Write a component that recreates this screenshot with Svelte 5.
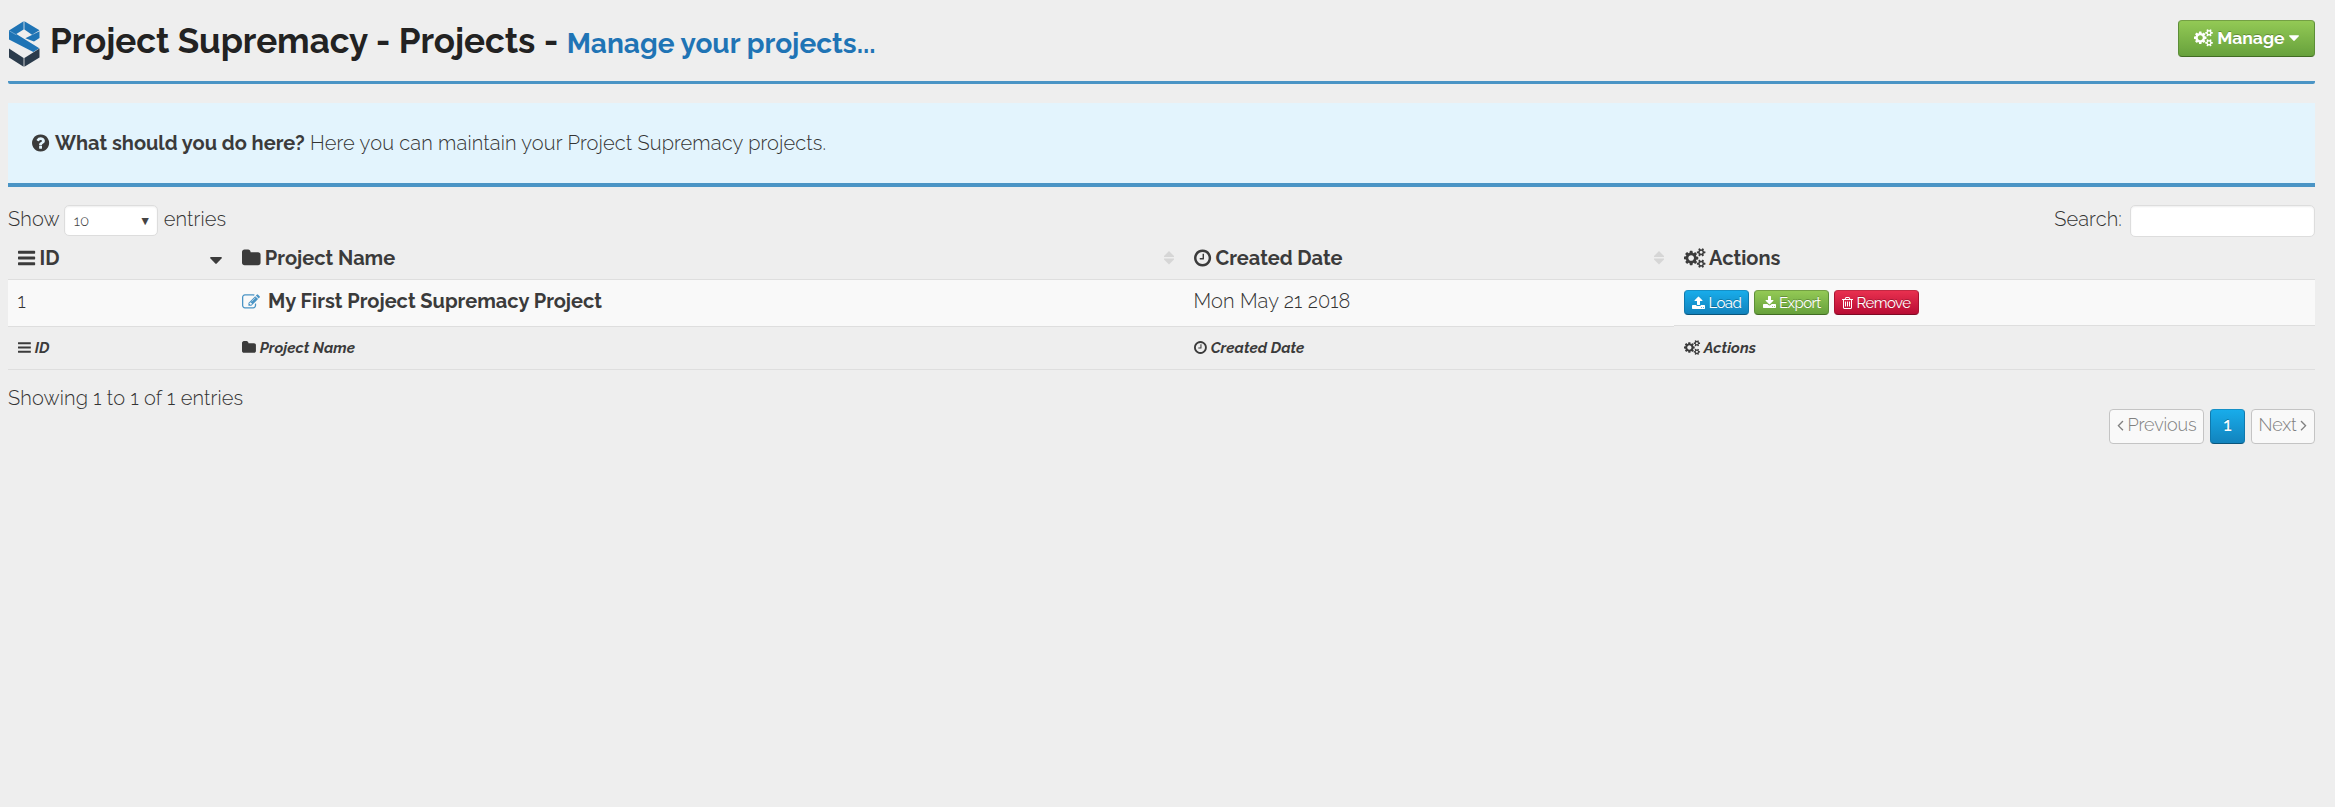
<script>
  const gears = 'M896 896q0-106-75-181t-181-75-181 75-75 181 75 181 181 75 181-75 75-181zm768 512q0-52-38-90t-90-38-90 38-38 90q0 53 37.5 90.5t90.5 37.5 90.5-37.5 37.5-90.5zm0-1024q0-52-38-90t-90-38-90 38-38 90q0 53 37.5 90.5t90.5 37.5 90.5-37.5 37.5-90.5zm-384 421v185q0 10-7 19.5t-16 10.5l-155 24q-11 35-32 76 34 48 90 115 7 11 7 20 0 12-7 19-23 30-82.5 89.5t-78.5 59.5q-11 0-21-7l-115-90q-37 19-77 31-11 108-23 155-7 24-30 24h-186q-11 0-20-7.5t-10-17.5l-23-153q-34-10-75-31l-118 89q-7 7-20 7-11 0-21-8-144-133-144-160 0-9 7-19 10-14 41-53t47-61q-23-44-35-82l-152-24q-10-1-17-9.5t-7-19.5v-185q0-10 7-19.5t16-10.5l155-24q11-35 32-76-34-48-90-115-7-11-7-20 0-12 7-20 22-30 82-89t79-59q11 0 21 7l115 90q34-18 77-32 11-108 23-154 7-24 30-24h186q11 0 20 7.5t10 17.5l23 153q34 10 75 31l118-89q8-7 20-7 11 0 21 8 144 133 144 160 0 8-7 19-12 16-42 54t-45 60q23 48 34 82l152 23q10 2 17 10.5t7 19.5zm640 533v140q0 16-149 31-12 27-30 52 51 113 51 138 0 4-4 7-122 71-124 71-8 0-46-47t-52-68q-20 2-30 2t-30-2q-14 21-52 68t-46 47q-2 0-124-71-4-3-4-7 0-25 51-138-18-25-30-52-149-15-149-31v-140q0-16 149-31 13-29 30-52-51-113-51-138 0-4 4-7 4-2 35-20t59-34 30-16q8 0 46 46.5t52 67.5q20-2 30-2t30 2q51-71 92-112l6-2q4 0 124 70 4 3 4 7 0 25-51 138 17 23 30 52 149 15 149 31zm0-1024v140q0 16-149 31-12 27-30 52 51 113 51 138 0 4-4 7-122 71-124 71-8 0-46-47t-52-68q-20 2-30 2t-30-2q-14 21-52 68t-46 47q-2 0-124-71-4-3-4-7 0-25 51-138-18-25-30-52-149-15-149-31v-140q0-16 149-31 13-29 30-52-51-113-51-138 0-4 4-7 4-2 35-20t59-34 30-16q8 0 46 46.5t52 67.5q20-2 30-2t30 2q51-71 92-112l6-2q4 0 124 70 4 3 4 7 0 25-51 138 17 23 30 52 149 15 149 31z';
  // Each icon: left edge of the glyph, its advance width, its outline.
  const icons = {
    gears: [0, 1920, gears],
    help: [128, 1536, 'M1024 1376v-192q0-14-9-23t-23-9h-192q-14 0-23 9t-9 23v192q0 14 9 23t23 9h192q14 0 23-9t9-23zm256-672q0-88-55.5-163t-138.5-116-170-41q-243 0-371 213-15 24 8 42l132 100q7 6 19 6 16 0 25-12 53-68 86-92 34-24 86-24 48 0 85.5 26t37.5 59q0 38-20 61t-68 45q-63 28-115.5 86.5t-52.5 125.5v36q0 14 9 23t23 9h192q14 0 23-9t9-23q0-19 21.5-49.5t54.5-49.5q32-18 49-28.5t46-35 44.5-48 28-60.5 12.5-81zm384 192q0 209-103 385.5t-279.5 279.5-385.5 103-385.5-103-279.5-279.5-103-385.5 103-385.5 279.5-279.5 385.5-103 385.5 103 279.5 279.5 103 385.5z'],
    clock: [128, 1536, 'M1024 544v448q0 14-9 23t-23 9h-320q-14 0-23-9t-9-23v-64q0-14 9-23t23-9h224v-352q0-14 9-23t23-9h64q14 0 23 9t9 23zm416 352q0-148-73-273t-198-198-273-73-273 73-198 198-73 273 73 273 198 198 273 73 273-73 198-198 73-273zm224 0q0 209-103 385.5t-279.5 279.5-385.5 103-385.5-103-279.5-279.5-103-385.5 103-385.5 279.5-279.5 385.5-103 385.5 103 279.5 279.5 103 385.5z'],
    folder: [64, 1664, 'M1728 608v704q0 92-66 158t-158 66h-1216q-92 0-158-66t-66-158v-960q0-92 66-158t158-66h320q92 0 158 66t66 158v32h672q92 0 158 66t66 158z'],
    bars: [128, 1536, 'M1664 1344v128q0 26-19 45t-45 19h-1408q-26 0-45-19t-19-45v-128q0-26 19-45t45-19h1408q26 0 45 19t19 45zm0-512v128q0 26-19 45t-45 19h-1408q-26 0-45-19t-19-45v-128q0-26 19-45t45-19h1408q26 0 45 19t19 45zm0-512v128q0 26-19 45t-45 19h-1408q-26 0-45-19t-19-45v-128q0-26 19-45t45-19h1408q26 0 45 19t19 45z'],
    edit: [0, 1792, 'M888 1184l116-116-152-152-116 116v56h96v96h56zm440-720q-16-16-33 1l-350 350q-17 17-1 33t33-1l350-350q17-17 1-33zm80 594v190q0 119-84.5 203.5t-203.5 84.5h-832q-119 0-203.5-84.5t-84.5-203.5v-832q0-119 84.5-203.5t203.5-84.5h832q63 0 117 25 15 7 18 23 3 17-9 29l-49 49q-14 14-32 8-23-6-45-6h-832q-66 0-113 47t-47 113v832q0 66 47 113t113 47h832q66 0 113-47t47-113v-126q0-13 9-22l64-64q15-15 35-7t20 29zm-96-738l288 288-672 672h-288v-288zm444 132l-92 92-288-288 92-92q28-28 68-28t68 28l152 152q28 28 28 68t-28 68z'],
    upload: [64, 1664, 'M1344 1472q0-26-19-45t-45-19-45 19-19 45 19 45 45 19 45-19 19-45zm256 0q0-26-19-45t-45-19-45 19-19 45 19 45 45 19 45-19 19-45zm128-224v320q0 40-28 68t-68 28h-1472q-40 0-68-28t-28-68v-320q0-40 28-68t68-28h427q21 56 70.5 92t110.5 36h256q61 0 110.5-36t70.5-92h427q40 0 68 28t28 68zm-325-648q-17 40-59 40h-256v448q0 26-19 45t-45 19h-256q-26 0-45-19t-19-45v-448h-256q-42 0-59-40-17-39 14-69l448-448q18-19 45-19t45 19l448 448q31 30 14 69z'],
    download: [64, 1664, 'M1344 1344q0-26-19-45t-45-19-45 19-19 45 19 45 45 19 45-19 19-45zm256 0q0-26-19-45t-45-19-45 19-19 45 19 45 45 19 45-19 19-45zm128-224v320q0 40-28 68t-68 28h-1472q-40 0-68-28t-28-68v-320q0-40 28-68t68-28h465l135 136q58 56 136 56t136-56l136-136h464q40 0 68 28t28 68zm-325-569q17 41-14 70l-448 448q-18 19-45 19t-45-19l-448-448q-31-29-14-70 17-39 59-39h256v-448q0-26 19-45t45-19h256q26 0 45 19t19 45v448h256q42 0 59 39z'],
    trash: [192, 1408, 'M704 736v576q0 14-9 23t-23 9h-64q-14 0-23-9t-9-23v-576q0-14 9-23t23-9h64q14 0 23 9t9 23zm256 0v576q0 14-9 23t-23 9h-64q-14 0-23-9t-9-23v-576q0-14 9-23t23-9h64q14 0 23 9t9 23zm256 0v576q0 14-9 23t-23 9h-64q-14 0-23-9t-9-23v-576q0-14 9-23t23-9h64q14 0 23 9t9 23zm128 724v-948h-896v948q0 22 7 40.5t14.5 27 10.5 8.5h832q3 0 10.5-8.5t14.5-27 7-40.5zm-672-1076h448l-48-117q-7-9-17-11h-317q-10 2-17 11zm928 32v64q0 14-9 23t-23 9h-96v948q0 83-47 143.5t-113 60.5h-832q-66 0-113-58.5t-47-141.5v-952h-96q-14 0-23-9t-9-23v-64q0-14 9-23t23-9h309l70-167q15-37 54-63t79-26h320q40 0 79 26t54 63l70 167h309q14 0 23 9t9 23z'],
    caret: [384, 1024, 'M1408 704q0 26-19 45l-448 448q-19 19-45 19t-45-19l-448-448q-19-19-19-45t19-45 45-19h896q26 0 45 19t19 45z'],
    left: [540, 640, 'M1171 544q0 13-10 23l-393 393 393 393q10 10 10 23t-10 23l-50 50q-10 10-23 10t-23-10l-466-466q-10-10-10-23t10-23l466-466q10-10 23-10t23 10l50 50q10 10 10 23z'],
    right: [560, 640, 'M1107 960q0 13-10 23l-466 466q-10 10-23 10t-23-10l-50-50q-10-10-10-23t10-23l393-393-393-393q-10-10-10-23t10-23l50-50q10-10 23-10t23 10l466 466q10 10 10 23z'],
  };
  const columns = [
    { label: 'ID', icon: 'bars', sort: 'down' },
    { label: 'Project Name', icon: 'folder', sort: 'both' },
    { label: 'Created Date', icon: 'clock', sort: 'both' },
    { label: 'Actions', icon: 'gears', sort: '' },
  ];
  const actions = [
    { label: 'Load', icon: 'upload', kind: 'blue' },
    { label: 'Export', icon: 'download', kind: 'green' },
    { label: 'Remove', icon: 'trash', kind: 'red' },
  ];
</script>

{#snippet icon(name)}
  <svg class="icon" viewBox="{icons[name][0]} 0 {icons[name][1]} 1792" style="width:{icons[name][1] / 1792}em"><path d={icons[name][2]} /></svg>
{/snippet}

<main>
  <header>
    <svg class="logo" viewBox="0 0 31 46">
      <path fill="#1f74b5" d="M0 9.500 14.600.300V8.500L7.300 13 30.300 27.300 24.300 31 0 18.500z" />
      <path fill="#1f74b5" d="M15.400.300 30.500 9.300 23 13.800 15.400 8.500zM30.500 10.300V17L25 20.600 16.300 17.200z" />
      <path fill="none" stroke="#9cc3e0" stroke-width=".6" d="M.5 10 7.300 13.800" />
      <path fill="#2b3b4b" d="M0 27.500 14.600 37v8.700L0 36.500zM30.500 27.500 15.400 37v8.700l15.100-9.200z" />
    </svg>
    <h1>Project Supremacy - Projects - <small>Manage your projects...</small></h1>
    <button class="btn green manage">{@render icon('gears')} Manage {@render icon('caret')}</button>
  </header>

  <section class="info">
    {@render icon('help')} <b>What should you do here?</b> Here you can maintain your Project Supremacy projects.
  </section>

  <div class="controls">
    <label>Show <span class="select">10<i>▼</i></span> entries</label>
    <label>Search: <input type="text" /></label>
  </div>

  <div class="table">
    {#each columns as c}
      <div class="th"><span>{@render icon(c.icon)} {c.label}</span>
        {#if c.sort === 'down'}
          <svg class="sort down" viewBox="0 0 12 7"><path d="M.8 0h10.400q1.100.5.300 1.500L6.700 6.600q-.7.600-1.400 0L.5 1.500Q-.3.500.8 0z" /></svg>
        {:else if c.sort}
          <svg class="sort" viewBox="0 0 10 14"><path d="M5 0l5 5v1H0V5zM5 13.500l5-5v-1H0v1z" /></svg>
        {/if}
      </div>
    {/each}
    <div class="td">1</div>
    <div class="td"><span class="edit">{@render icon('edit')}</span><b>My First Project Supremacy Project</b></div>
    <div class="td">Mon May 21 2018</div>
    <div class="td acts">
      {#each actions as a}
        <button class="btn small {a.kind}">{@render icon(a.icon)} {a.label}</button>
      {/each}
    </div>
    {#each columns as c}
      <div class="tf">{@render icon(c.icon)} <em>{c.label}</em></div>
    {/each}
  </div>

  <div class="summary">Showing 1 to 1 of 1 entries</div>
  <nav>
    <button class="page prev">{@render icon('left')} Previous</button>
    <button class="page btn blue current">1</button>
    <button class="page next">Next {@render icon('right')}</button>
  </nav>
</main>

<style>
  :global(body) { background: #eee; }
  main { box-sizing: border-box; width: 2335px; height: 807px; padding: 0 20px 0 8px; font: 300 20px/28px Raleway, Lato, sans-serif; letter-spacing: .13px; color: #333; }
  b { font-weight: 700; letter-spacing: 0; color: #3b3b3b; }
  .icon { display: inline-block; height: 1em; vertical-align: -0.143em; fill: currentColor; overflow: visible; }
  header { display: flex; height: 84px; box-sizing: border-box; border-bottom: 3px solid #4a94c5; border-radius: 2px; }
  .logo { width: 31px; height: 46px; margin: 21px 10px 0 1px; }
  h1 { margin: 20px auto 0 0; font-size: 35px; line-height: 42px; font-weight: 700; letter-spacing: -.03px; color: #222; white-space: nowrap; }
  small { font-size: 28px; letter-spacing: .02px; color: #1f74b5; }
  button { font-family: inherit; box-sizing: border-box; padding: 0; white-space: nowrap; letter-spacing: 0; }
  .btn { color: #fff; border: 1px solid; border-radius: 4px; text-shadow: 0 -1px 0 rgba(0, 0, 0, .25); }
  .green { background: linear-gradient(#93c955, #67a13c); border-color: #74a044 #5c8e37 #416b23; }
  .blue { background: linear-gradient(#18acea, #1283bd); border-color: #1590c7 #1079ad #0a557b; }
  .red { background: linear-gradient(#e8304f, #b90c34); border-color: #c32943 #a81230 #7d0923; }
  .manage { width: 137px; height: 37px; margin-top: 20px; padding-bottom: 2px; font-size: 17.5px; font-weight: 700; line-height: 30px; }
  .info { margin-top: 19px; box-sizing: border-box; height: 84px; padding: 26px 24px; background: #e3f4fd; border-bottom: 4px solid #4a94c5; }
  .info .icon { margin-right: .5px; fill: #3b3b3b; }
  .controls { display: flex; justify-content: space-between; height: 55px; padding-top: 18px; box-sizing: border-box; }
  label { display: flex; }
  .select { display: flex; justify-content: space-between; width: 94px; height: 31px; box-sizing: border-box; margin: 0 6px 0 4px; padding: 0 8px 0 9px; background: #fff; border: 1px solid #ddd; border-radius: 5px; font-size: 15px; line-height: 31px; color: #444; box-shadow: inset 0 1px 2px rgba(0, 0, 0, .07); }
  .select i { font: 9.500px/30px "DejaVu Sans", sans-serif; letter-spacing: 0; }
  input { width: 185px; height: 32px; box-sizing: border-box; margin: 0 0 0 8px; border: 1px solid #ddd; border-radius: 5px; background: #fff; box-shadow: inset 0 1px 2px rgba(0, 0, 0, .07); }
  .table { display: grid; grid-template-columns: 224px 952px 490px 641px; grid-template-rows: 38px 47px 43px; }
  .th, .td, .tf { box-sizing: border-box; padding: 0 9px 0 9.500px; border-bottom: 1px solid #dedede; }
  .th { display: flex; justify-content: space-between; align-items: flex-start; padding-top: 2px; font-weight: 700; letter-spacing: 0; color: #3b3b3b; }
  .sort { width: 10px; height: 14px; margin: 7px 1px 0 0; fill: #d6d6d6; }
  .sort.down { width: 12px; height: 7px; margin-top: 13px; fill: #3b3b3b; }
  .td { background: #f9f9f9; padding-top: 7px; }
  .edit { color: #4a94c5; margin-right: 8.500px; font-size: 18px; }
  .acts { display: flex; gap: 5px; height: 46px; padding: 10px 10px 0; }
  .small { height: 25px; padding: 1px 7.200px 0; font-size: 15px; letter-spacing: -.55px; line-height: 22px; }
  .small .icon { font-size: 14px; }
  .tf { padding-top: 11px; font-size: 15px; line-height: 20px; font-weight: 700; letter-spacing: 0; color: #3b3b3b; }
  .tf em { margin-left: .7px; letter-spacing: .06px; }
  .summary { margin-top: 14px; height: 25px; }
  nav { display: flex; justify-content: flex-end; gap: 6px; }
  .page { height: 35px; padding: 0 0 3px; font-size: 18px; font-weight: 300; letter-spacing: -.15px; line-height: 26px; border-radius: 4px; }
  .page:not(.btn) { background: #f9f9f9; border: 1px solid #c4c4c4; color: #808080; }
  .prev { width: 95px; }
  .next { width: 64px; }
  .page.current { width: 35px; font-weight: 500; }
</style>
